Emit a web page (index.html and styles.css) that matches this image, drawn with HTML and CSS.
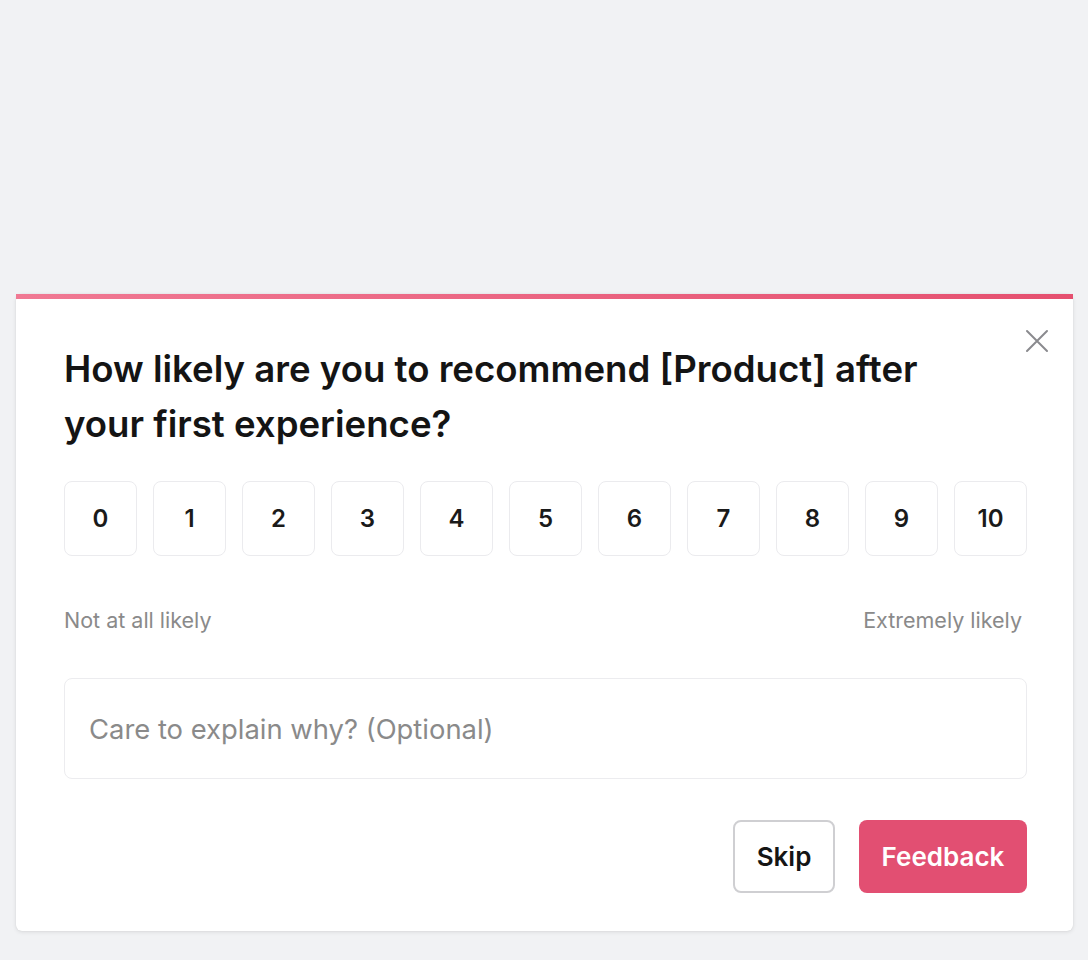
FILE: index.html
```html
<!DOCTYPE html>
<html lang="en">
<head>
<meta charset="utf-8">
<title>NPS Survey</title>
<link rel="stylesheet" href="styles.css">
</head>
<body>
<div class="page">
  <div class="card">
    <button class="close" aria-label="Close">
      <svg width="24" height="24" viewBox="0 0 24 24" fill="none" stroke="#8a8a8e" stroke-width="2" stroke-linecap="round"><path d="M2 2 L22 22 M22 2 L2 22"/></svg>
    </button>
    <h1 class="title">How likely are you to recommend [Product] after your first experience?</h1>
    <div class="scale">
      <div class="num">0</div><div class="num">1</div><div class="num">2</div><div class="num">3</div><div class="num">4</div><div class="num">5</div><div class="num">6</div><div class="num">7</div><div class="num">8</div><div class="num">9</div><div class="num">10</div>
    </div>
    <div class="labels"><span>Not at all likely</span><span>Extremely likely</span></div>
    <div class="input">Care to explain why? (Optional)</div>
    <div class="actions">
      <button class="btn skip">Skip</button>
      <button class="btn primary">Feedback</button>
    </div>
  </div>
</div>
</body>
</html>
```
FILE: styles.css
```css
* { box-sizing: border-box; }
html, body { margin: 0; padding: 0; }
body {
  background: #f1f2f4;
  font-family: Inter, "Noto Sans", "Liberation Sans", sans-serif;
  width: 1088px;
  height: 960px;
  overflow: hidden;
}
.page {
  padding: 294px 15px 0 16px;
}
.card {
  position: relative;
  background: #ffffff;
  border-top: 5px solid #ec6584;
  border-image: linear-gradient(90deg, #f07993, #e5506f) 1;
  border-radius: 6px;
  box-shadow: 0 1px 4px rgba(0,0,0,0.10), 0 0 1px rgba(0,0,0,0.12);
  padding: 43px 45px 37px 48px;
  height: 637px;
}
.close {
  position: absolute;
  top: 30px;
  right: 24px;
  background: none;
  border: 0;
  padding: 0;
  width: 24px;
  height: 24px;
}
.title {
  margin: 0;
  font-size: 36.6px;
  font-weight: 600;
  line-height: 55px;
  color: #141414;
  max-width: 900px;
}
.scale {
  display: flex;
  gap: 16px;
  margin-top: 29px;
}
.num {
  width: 73px;
  height: 75px;
  border: 1.5px solid #ebebee;
  border-radius: 8px;
  display: flex;
  align-items: center;
  justify-content: center;
  font-size: 24px;
  font-weight: 600;
  color: #1a1a1a;
}
.labels {
  display: flex;
  justify-content: space-between;
  width: 958px;
  margin-top: 51px;
  font-size: 21.5px;
  line-height: 26px;
  color: #8a8a8a;
}
.input {
  width: 963px;
  height: 101px;
  margin-top: 45px;
  border: 1.5px solid #ececef;
  border-radius: 8px;
  padding: 0 24px;
  display: flex;
  align-items: center;
  font-size: 27.4px;
  color: #8a8a8a;
}
.actions {
  width: 963px;
  display: flex;
  justify-content: flex-end;
  gap: 24px;
  margin-top: 41px;
}
.btn {
  font-family: inherit;
  font-size: 26px;
  font-weight: 600;
  height: 73px;
  border-radius: 8px;
}
.skip {
  width: 102px;
  background: #fff;
  border: 2px solid #cfcfd2;
  color: #151515;
}
.primary {
  width: 168px;
  background: #e24f72;
  border: 0;
  color: #fff;
}
```
